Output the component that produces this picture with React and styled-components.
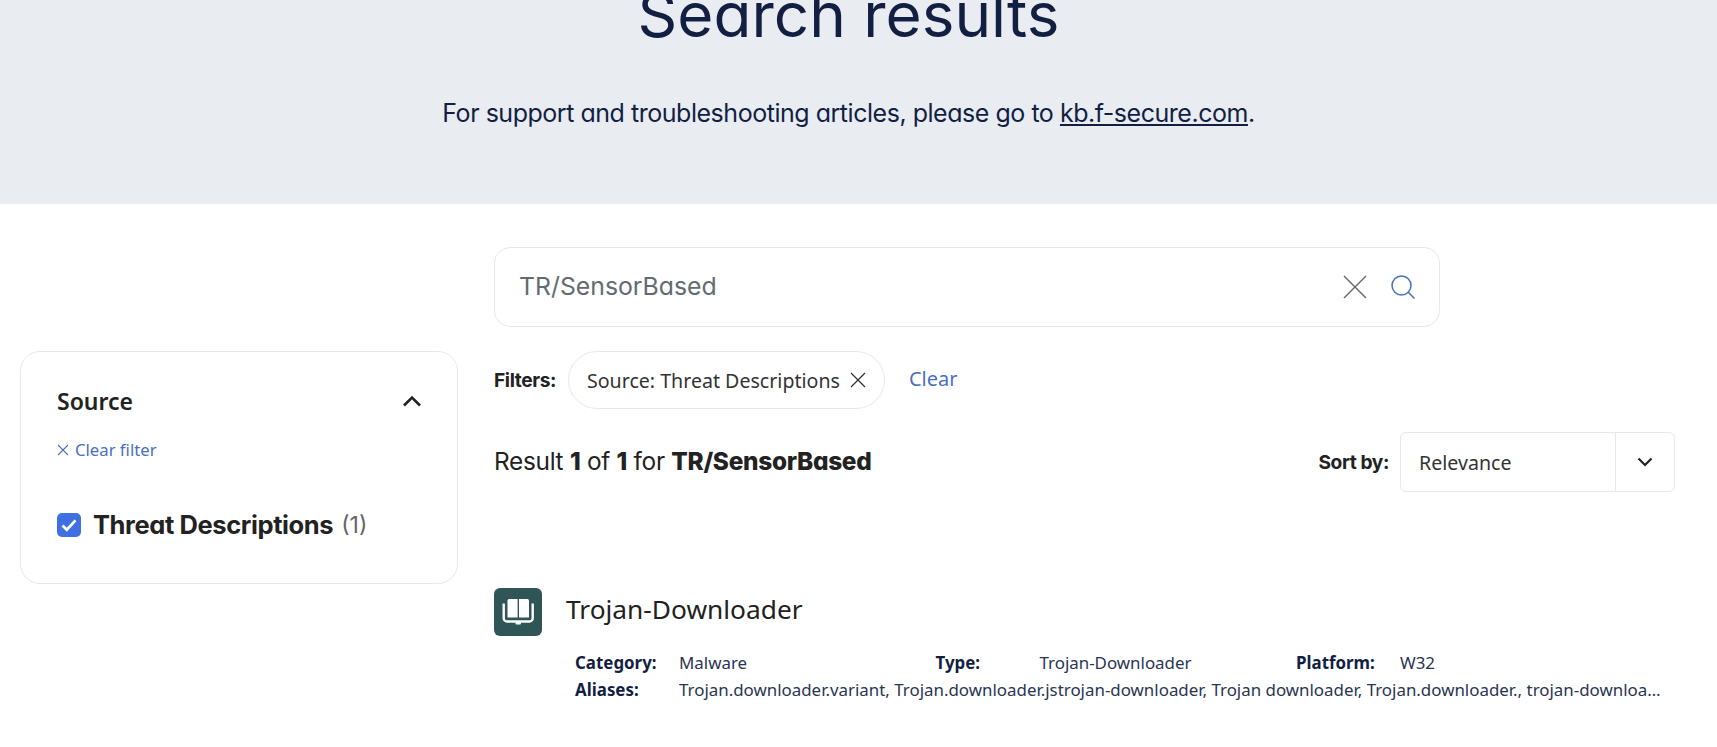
import React from "react";
import styled, { createGlobalStyle } from "styled-components";

const GlobalStyle = createGlobalStyle`
  html, body {
    margin: 0;
    padding: 0;
    background: #fff;
    overflow: hidden;
  }
  body {
    font-family: "Noto Sans", "Open Sans", sans-serif;
    color: #222;
  }
`;

const grotesk = `"Inter", "Liberation Sans", sans-serif`;

export default function App() {
  return (
    <Page>
      <GlobalStyle />
      <Banner>
        <Heading>Search results</Heading>
        <Lead>
          For support and troubleshooting articles, please go to{" "}
          <a href="#kb">kb.f-secure.com</a>.
        </Lead>
      </Banner>
      <Body>
        <Sidebar>
          <FacetHead>
            <FacetTitle>Source</FacetTitle>
            <svg width="20" height="12" viewBox="0 0 20 12" fill="none">
              <path d="M2 10.5 10 2.5l8 8" stroke="#222" strokeWidth="2.6" />
            </svg>
          </FacetHead>
          <ClearFilter>
            <svg width="12" height="12" viewBox="0 0 12 12" fill="none">
              <path d="M1 1l10 10M11 1 1 11" stroke="#4a6fc0" strokeWidth="1.1" />
            </svg>
            Clear filter
          </ClearFilter>
          <FacetOption>
            <CheckBox>
              <svg width="24" height="24" viewBox="0 0 24 24" fill="none">
                <path d="M5.5 12.5l4.3 4.2 8.7-9.4" stroke="#fff" strokeWidth="2.7" />
              </svg>
            </CheckBox>
            <OptionLabel>Threat Descriptions</OptionLabel>
            <OptionCount>(1)</OptionCount>
          </FacetOption>
        </Sidebar>

        <Main>
          <SearchBox>
            <SearchText>TR/SensorBased</SearchText>
            <svg width="24" height="24" viewBox="0 0 24 24" fill="none">
              <path d="M1 1l22 22M23 1 1 23" stroke="#666" strokeWidth="1.4" />
            </svg>
            <svg width="24" height="24" viewBox="0 0 24 24" fill="none">
              <circle cx="10.5" cy="10.5" r="9.5" stroke="#4a6fb5" strokeWidth="1.5" />
              <path d="M17 17l6.5 6.5" stroke="#4a6fb5" strokeWidth="1.5" />
            </svg>
          </SearchBox>

          <FilterRow>
            <StrongLabel>Filters:</StrongLabel>
            <Chip>
              Source: Threat Descriptions
              <svg width="16" height="16" viewBox="0 0 16 16" fill="none">
                <path d="M1 1l14 14M15 1 1 15" stroke="#333" strokeWidth="1.3" />
              </svg>
            </Chip>
            <ClearLink>Clear</ClearLink>
          </FilterRow>

          <ResultBar>
            <ResultCount>
              Result <b>1</b> of <b>1</b> for <b>TR/SensorBased</b>
            </ResultCount>
            <SortWrap>
              <StrongLabel>Sort by:</StrongLabel>
              <SortSelect>
                <SortValue>Relevance</SortValue>
                <SortArrow>
                  <svg width="16" height="10" viewBox="0 0 16 10" fill="none">
                    <path d="M1.5 1.5 8 8l6.5-6.5" stroke="#222" strokeWidth="2.2" />
                  </svg>
                </SortArrow>
              </SortSelect>
            </SortWrap>
          </ResultBar>

          <ResultHead>
            <BookBadge>
              <svg width="48" height="48" viewBox="0 0 48 48" fill="none">
                <path d="M15 11h8.6v18.5H13.5V12.5A1.5 1.5 0 0 1 15 11Z" fill="#fff" />
                <path d="M33.5 11H25v18.5h10V12.5A1.5 1.5 0 0 0 33.5 11Z" fill="#fff" />
                <path d="M9.7 15.5V30a3.3 3.3 0 0 0 3.3 3.5h22.4a3.3 3.3 0 0 0 3.3-3.5V15.5" stroke="#fff" strokeWidth="2.4" />
                <rect x="21.5" y="33" width="5.5" height="3.5" rx="1" fill="#fff" />
              </svg>
            </BookBadge>
            <ResultTitle>Trojan-Downloader</ResultTitle>
          </ResultHead>

          <Details>
            <DetailRow>
              <DetailCell>
                <DetailLabel>Category:</DetailLabel>
                <DetailValue>Malware</DetailValue>
              </DetailCell>
              <DetailCell>
                <DetailLabel>Type:</DetailLabel>
                <DetailValue>Trojan-Downloader</DetailValue>
              </DetailCell>
              <DetailCell>
                <DetailLabel>Platform:</DetailLabel>
                <DetailValue>W32</DetailValue>
              </DetailCell>
            </DetailRow>
            <DetailRow>
              <DetailLabel>Aliases:</DetailLabel>
              <AliasValue>
                Trojan.downloader.variant, Trojan.downloader.jstrojan-downloader, Trojan downloader, Trojan.downloader., trojan-downloader, Trojan.downloader.generic
              </AliasValue>
            </DetailRow>
          </Details>
        </Main>
      </Body>
    </Page>
  );
}

const Page = styled.div`
  width: 1717px;
  height: 747px;
  overflow: hidden;
`;

const Banner = styled.header`
  box-sizing: border-box;
  height: 204px;
  padding-right: 20px;
  background: #e9edf2;
  color: #131f42;
  display: flex;
  flex-direction: column;
  align-items: center;
  overflow: hidden;
  font-family: ${grotesk};
  font-feature-settings: "cv11";
`;

const Heading = styled.h1`
  margin: -21px 0 0;
  font-size: 62px;
  line-height: 72px;
  font-weight: 400;
`;

const Lead = styled.p`
  margin: 44px 0 0;
  font-size: 25px;
  line-height: 36px;
  letter-spacing: -0.47px;
  a {
    color: inherit;
  }
`;

const Body = styled.div`
  display: grid;
  grid-template-columns: 438px 1fr;
  column-gap: 36px;
  padding: 0 42px 0 20px;
  align-items: start;
`;

const Sidebar = styled.aside`
  box-sizing: border-box;
  height: 233px;
  margin-top: 147px;
  padding: 32px 35px 0 36px;
  border: 1px solid #e6e8ea;
  border-radius: 20px;
`;

const FacetHead = styled.div`
  display: flex;
  justify-content: space-between;
  align-items: center;
  height: 34px;
`;

const FacetTitle = styled.span`
  font-size: 23px;
  font-weight: 600;
  color: #222;
`;

const ClearFilter = styled.div`
  display: flex;
  align-items: center;
  gap: 6px;
  margin-top: 21px;
  font-size: 16.7px;
  line-height: 22px;
  color: #4a6fc0;
`;

const FacetOption = styled.div`
  display: flex;
  align-items: center;
  margin-top: 48px;
`;

const CheckBox = styled.span`
  width: 24px;
  height: 24px;
  border-radius: 5px;
  background: #3f6fe0;
  display: flex;
  align-items: center;
  justify-content: center;
  margin-right: 12px;
`;

const OptionLabel = styled.span`
  font-family: ${grotesk};
  font-feature-settings: "cv11";
  font-size: 25.5px;
  font-weight: 700;
  letter-spacing: -0.4px;
  color: #222;
`;

const OptionCount = styled.span`
  font-family: ${grotesk};
  font-size: 23px;
  color: #666;
  margin-left: 8px;
`;

const Main = styled.main`
  padding-top: 43px;
`;

const SearchBox = styled.div`
  box-sizing: border-box;
  width: 946px;
  height: 80px;
  border: 1px solid #e6e8ea;
  border-radius: 16px;
  display: flex;
  align-items: center;
  gap: 24px;
  padding: 0 24px;
`;

const SearchText = styled.span`
  flex: 1;
  font-family: ${grotesk};
  font-feature-settings: "cv11";
  font-size: 24.8px;
  line-height: 30px;
  margin-bottom: 2px;
  color: #626b72;
`;

const FilterRow = styled.div`
  display: flex;
  align-items: center;
  margin-top: 24px;
`;

const StrongLabel = styled.span`
  font-family: ${grotesk};
  font-feature-settings: "cv11";
  font-size: 19.2px;
  font-weight: 700;
  letter-spacing: -0.4px;
  color: #222;
`;

const Chip = styled.div`
  box-sizing: border-box;
  height: 58px;
  margin-left: 12px;
  padding: 0 18px;
  border: 1px solid #e6e8ea;
  border-radius: 29px;
  display: flex;
  align-items: center;
  gap: 10px;
  font-size: 19.6px;
  color: #333;
`;

const ClearLink = styled.span`
  margin-left: 24px;
  font-size: 20px;
  line-height: 26px;
  margin-bottom: 2px;
  color: #4a6fc0;
`;

const ResultBar = styled.div`
  display: flex;
  justify-content: space-between;
  align-items: center;
  margin-top: 23px;
`;

const ResultCount = styled.div`
  font-family: ${grotesk};
  font-feature-settings: "cv11";
  font-size: 24.4px;
  line-height: 30px;
  margin-bottom: 2px;
  letter-spacing: -0.3px;
  color: #222;
  b {
    font-weight: 800;
  }
`;

const SortWrap = styled.div`
  display: flex;
  align-items: center;
  gap: 11px;
`;

const SortSelect = styled.div`
  box-sizing: border-box;
  width: 275px;
  height: 60px;
  border: 1px solid #e6e8ea;
  border-radius: 6px;
  display: flex;
  align-items: center;
`;

const SortValue = styled.span`
  flex: 1;
  padding-left: 18px;
  font-size: 19.6px;
  color: #333;
`;

const SortArrow = styled.span`
  width: 58px;
  height: 100%;
  border-left: 1px solid #e6e8ea;
  display: flex;
  align-items: center;
  justify-content: center;
`;

const ResultHead = styled.div`
  display: flex;
  align-items: center;
  gap: 24px;
  margin-top: 96px;
`;

const BookBadge = styled.span`
  width: 48px;
  height: 48px;
  border-radius: 6px;
  background: #2f5557;
  display: flex;
  align-items: center;
  justify-content: center;
`;

const ResultTitle = styled.span`
  font-size: 26.3px;
  line-height: 42px;
  margin-bottom: 6px;
  color: #222;
`;

const Details = styled.div`
  margin: 13px 0 0 81px;
  width: 1092px;
  font-size: 16.9px;
  line-height: 27px;
  color: #131f42;
`;

const DetailRow = styled.div`
  display: flex;
`;

const DetailCell = styled.div`
  display: flex;
  width: 360.5px;
`;

const DetailLabel = styled.span`
  width: 104px;
  flex: none;
  font-weight: 700;
`;

const DetailValue = styled.span`
  color: #2a3553;
`;

const AliasValue = styled.span`
  flex: 1;
  min-width: 0;
  white-space: nowrap;
  overflow: hidden;
  text-overflow: ellipsis;
  color: #2a3553;
`;
